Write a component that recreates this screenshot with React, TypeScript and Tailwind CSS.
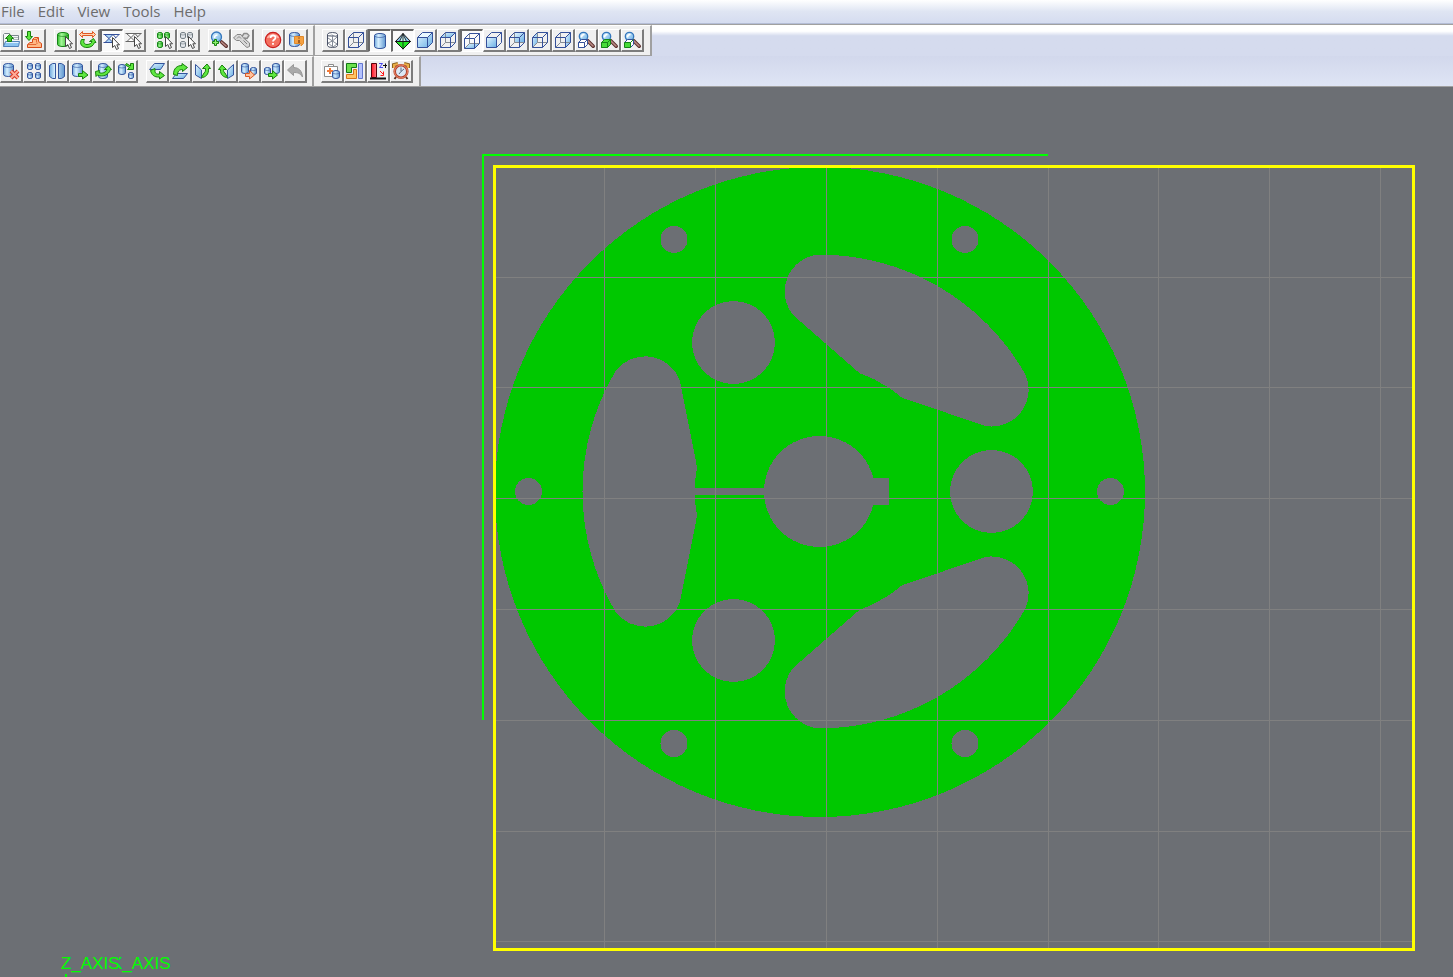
import React from "react";

const NAVY = "#34509a";
const GREEN = "#17800c";
const BLUE_LINE = "#34549c";

type Kids = { children: React.ReactNode };

function Icon({ children }: Kids) {
  return (
    <svg viewBox="0 0 20 20" className="block h-5 w-5" fill="none" aria-hidden="true">
      {children}
    </svg>
  );
}

function Gradients() {
  return (
    <svg className="absolute h-0 w-0" aria-hidden="true">
      <defs>
        <linearGradient id="blue" x1="0" y1="0" x2="1" y2="0">
          <stop offset="0" stopColor="#6fa8dc" />
          <stop offset="0.35" stopColor="#d6efff" />
          <stop offset="1" stopColor="#5f97d0" />
        </linearGradient>
        <linearGradient id="sky" x1="0" y1="0" x2="1" y2="1">
          <stop offset="0" stopColor="#e4f6ff" />
          <stop offset="1" stopColor="#68aee4" />
        </linearGradient>
        <linearGradient id="leaf" x1="0" y1="0" x2="1" y2="0">
          <stop offset="0" stopColor="#2fbd28" />
          <stop offset="0.35" stopColor="#a4f79a" />
          <stop offset="1" stopColor="#2cb522" />
        </linearGradient>
        <linearGradient id="rose" x1="0" y1="0" x2="1" y2="0">
          <stop offset="0" stopColor="#ff1020" />
          <stop offset="1" stopColor="#ff8088" />
        </linearGradient>
      </defs>
    </svg>
  );
}

type CylProps = { x: number; y: number; w: number; h: number; fill?: string; line?: string };

function Cyl({ x, y, w, h, fill = "url(#blue)", line = BLUE_LINE }: CylProps) {
  const r = w / 2;
  const e = Math.min(2, w / 4);
  return (
    <g stroke={line}>
      <path
        fill={fill}
        d={`M${x} ${y + e}A${r} ${e} 0 0 1 ${x + w} ${y + e}V${y + h - e}A${r} ${e} 0 0 1 ${x} ${y + h - e}Z`}
      />
      <path d={`M${x} ${y + e}A${r} ${e} 0 0 0 ${x + w} ${y + e}`} strokeOpacity="0.6" />
    </g>
  );
}

function Cursor() {
  return <path d="M10.5 6.5V16.5L12.8 14.5L14.5 18.5L16.5 17.5L14.8 13.8H17.5Z" fill="#fff" stroke="#444" />;
}

type ShapeProps = { d: string; fill?: string; line?: string };

function Shape({ d, fill = "#5fe840", line = GREEN }: ShapeProps) {
  return <path d={d} fill={fill} stroke={line} strokeLinejoin="round" />;
}

type Face = "all" | "none" | "top" | "bottom" | "front" | "back" | "left" | "right";

const facePaths: Record<Face, string> = {
  none: "",
  all: "M2.5 7.5L7.5 2.5H17.5V12.5L12.5 17.5H2.5Z",
  top: "M2.5 7.5L7.5 2.5H17.5L12.5 7.5Z",
  bottom: "M2.5 17.5L7.5 12.5H17.5L12.5 17.5Z",
  front: "M2.5 7.5H12.5V17.5H2.5Z",
  back: "M7.5 2.5H17.5V12.5H7.5Z",
  left: "M2.5 7.5L7.5 2.5V12.5L2.5 17.5Z",
  right: "M12.5 7.5L17.5 2.5V12.5L12.5 17.5Z",
};

function Cube({ face }: { face: Face }) {
  const solid = face === "all" || face === "front";
  return (
    <Icon>
      <path d={facePaths[face]} fill="url(#sky)" />
      {!solid && <path d="M7.5 2.5V12.5H17.5M7.5 12.5L2.5 17.5" stroke="#858b93" />}
      {face === "all" && <path d={facePaths.top} fill="#e9f8ff" />}
      <path
        d="M2.5 7.5H12.5V17.5H2.5ZM2.5 7.5L7.5 2.5H17.5V12.5L12.5 17.5M12.5 7.5L17.5 2.5"
        stroke={NAVY}
        strokeLinejoin="round"
      />
    </Icon>
  );
}

function Lens({ cx, cy, r }: { cx: number; cy: number; r: number }) {
  return (
    <>
      <path d={`M${cx + r} ${cy + r}L17.2 16.2`} stroke="#5c302e" strokeWidth="3.6" strokeLinecap="round" />
      <path d={`M${cx + r} ${cy + r}L17 16`} stroke="#b98a84" strokeWidth="1.6" strokeLinecap="round" />
      <circle cx={cx} cy={cy} r={r} fill="url(#sky)" stroke="#3577bd" strokeWidth="1.3" />
      <path d={`M${cx - 2} ${cy + 1}A3 3 0 0 1 ${cx + 1} ${cy - 2}`} stroke="#fff" strokeWidth="1.5" />
    </>
  );
}

function ZoomCube({ fill, line, small }: { fill: string; line: string; small?: boolean }) {
  return (
    <Icon>
      <Lens cx={7.5} cy={6.5} r={4.2} />
      {small && <path d="M2.5 12.5L5.5 9.5H11.5V14.5L8.5 17.5" fill="#fff" stroke={NAVY} />}
      {!small && <path d="M2.5 12.5L5.5 9.5H11.5V14.5L8.5 17.5H2.5Z" fill={fill} stroke={line} />}
      <path d="M2.5 12.5H8.5V17.5H2.5ZM8.5 12.5L11.5 9.5" fill={fill} stroke={line} />
    </Icon>
  );
}

const Open = (
  <Icon>
    <path d="M2.5 16.5V4.5L3.5 3.5H8.5L9.5 5.5H17.5V10" fill="#f4f6f6" stroke="#7b858c" />
    <path d="M11 7.5H17M12 9.5H17" stroke="#b0b7bb" />
    <path d="M2.5 16.5L4.5 11.5H18.5L17.5 16.5Z" fill="#8cc4f0" stroke="#4f82bc" />
    <path d="M5 12.5H17.5" stroke="#dff1ff" />
    <Shape d="M8.5 4.5L12.5 8.5H10.5V11.5H6.5V8.5H4.5Z" fill="#48c832" />
  </Icon>
);

const ImportPart = (
  <Icon>
    <path
      d="M3.5 14.5L6 12.5H8.5V9.5L10.5 7.5H14.5V11.5L17.5 13.5V17.5H3.5Z"
      fill="#ffb986"
      stroke="#d84a18"
      strokeLinejoin="round"
    />
    <path d="M8.5 9.5H12.5L14 8M12.5 9.5V12.5M4 14.5H12L14 12.5" stroke="#d84a18" strokeOpacity="0.7" />
    <Shape d="M3.5 1.5H6.5V6.5H8.5L5 10.5L1.5 6.5H3.5Z" />
  </Icon>
);

const PickPart = (
  <Icon>
    <Cyl x={2.5} y={2.5} w={11} h={14} fill="url(#leaf)" line="#168417" />
    <Cursor />
  </Icon>
);

const Rotate = (
  <Icon>
    <Shape d="M1.5 4.5L4.5 1.5V3.5H14.5V1.5L17.5 4.5L14.5 7.5V5.5H4.5V7.5Z" fill="#ffd4b2" line="#e15720" />
    <Shape d="M3.5 9.5H6.5C5 12 6 14.5 9 14.5C12 14.5 13.5 13 14 11.5H11.5L15.5 8.5L18 12.5H16.5C15.5 15.5 13 17.5 9 17.5C4 17.5 1 14 3.5 9.5Z" />
  </Icon>
);

function PickFilter({ fill, line }: { fill: string; line: string }) {
  return (
    <Icon>
      <path d="M2.5 3.5L7 7.5L11 3.5Z" fill={fill} />
      <path d="M3 11.5L7 7.5L11 11.5Z" fill={fill} />
      <path
        d="M1.5 3.5H17.5M1.5 11.5H11M2.5 3.5L7 7.5L11 3.5L14 7M3 11.5L7 7.5L10.5 11M17 3.5L13 7.5"
        stroke={line}
      />
      <Cursor />
    </Icon>
  );
}

function PickGroup({ fill, line }: { fill: string; line: string }) {
  return (
    <Icon>
      <Cyl x={2.5} y={2.5} w={5} h={6} fill={fill} line={line} />
      <Cyl x={9.5} y={2.5} w={5} h={6} fill={fill} line={line} />
      <Cyl x={2.5} y={11.5} w={5} h={6} fill={fill} line={line} />
      <Cursor />
    </Icon>
  );
}

const ZoomIn = (
  <Icon>
    <Lens cx={7.5} cy={7} r={5} />
    <Shape d="M5.5 9.5H7.5V11.5H9.5V13.5H7.5V15.5H5.5V13.5H3.5V11.5H5.5Z" fill="#8cf070" />
  </Icon>
);

const Link = (
  <Icon>
    <path
      d="M10 6.5L12 3.5H15L17 5.5L15 8.5L12 8"
      fill="#dcdcdc"
      stroke="#8c8c8c"
      strokeWidth="1.4"
      strokeLinejoin="round"
    />
    <path
      d="M1.5 8L5 4.5H9L11 7.5L17.5 13V16.5L15 17.5L12.5 15.5L7.5 10.5H4.5Z"
      fill="#d8d8d8"
      stroke="#858585"
      strokeLinejoin="round"
    />
    <path d="M5 8.5L7 6.5L9 8.5M11.5 10.5L15 14" stroke="#858585" />
  </Icon>
);

const HelpMark = (
  <Icon>
    <circle cx="10" cy="10" r="7.7" fill="#f4705f" stroke="#c91f1f" strokeWidth="1.2" />
    <path d="M4.5 8A6 5 0 0 1 15.5 8" stroke="#ffb3a8" strokeWidth="1.5" />
    <path
      d="M7.5 8C7.5 4.7 12.5 4.7 12.5 7.7C12.5 9.5 10 9.5 10 11.5M10 13V14.8"
      stroke="#fff"
      strokeWidth="1.8"
    />
  </Icon>
);

const PartInfo = (
  <Icon>
    <Cyl x={3.5} y={2.5} w={10} h={14} />
    <path d="M8.5 6.5H17.5V13.5L15 16V13.5H8.5Z" fill="#f5a142" stroke="#e08a2a" />
    <path d="M13 7.5V8.5M13 10V13" stroke="#8b4a12" strokeWidth="1.5" />
  </Icon>
);

const Mesh = (
  <Icon>
    <Cyl x={4.5} y={2.5} w={10} h={15} fill="#fff" line="#4c5468" />
    <path d="M5 6L9 5L14 7L9.5 11L5 8M5 13L9.5 11L14 14L10 17L5 13M9.5 5V17" stroke="#858c98" />
  </Icon>
);

const Shaded = (
  <Icon>
    <Cyl x={4.5} y={2.5} w={11} h={15} />
  </Icon>
);

const Diamond = (
  <Icon>
    <path d="M2.5 10.5L10 2.5L17.5 10.5Z" fill="#8cc4e8" stroke="#111" />
    <path d="M10 3L13.5 10.5H6.5Z" fill="#c6f0f4" />
    <path d="M2.5 10.5H17.5L10 18Z" fill="#21e421" stroke="#111" />
    <path d="M10 2V18.5M6.5 10.5L10 3L13.5 10.5" stroke="#111" strokeWidth="0.8" />
  </Icon>
);

const Delete = (
  <Icon>
    <Cyl x={2.5} y={2.5} w={10} h={13} />
    <path d="M10 10L17 17M17 10L10 17" stroke="#d93a28" strokeWidth="4" />
    <path d="M10 10L17 17M17 10L10 17" stroke="#ffab98" strokeWidth="1.8" />
  </Icon>
);

const Pattern = (
  <Icon>
    <Cyl x={3.5} y={2.5} w={5} h={6} />
    <Cyl x={11.5} y={2.5} w={5} h={6} />
    <Cyl x={3.5} y={11.5} w={5} h={6} />
    <Cyl x={11.5} y={11.5} w={5} h={6} />
  </Icon>
);

const Split = (
  <Icon>
    <path
      d="M8.5 2.5V17.5H5.5L2.5 15.5V4.5L5.5 2.5ZM11.5 2.5V17.5H14.5L17.5 15.5V4.5L14.5 2.5Z"
      fill="url(#blue)"
      stroke={BLUE_LINE}
    />
  </Icon>
);

const Move = (
  <Icon>
    <Cyl x={2.5} y={2.5} w={10} h={13} />
    <Shape d="M8.5 12.5H12.5V9.5L18 14L12.5 18V15.5H8.5Z" />
  </Icon>
);

const Spin = (
  <Icon>
    <Cyl x={5.5} y={2.5} w={9} h={15} />
    <Shape d="M2.5 10.5L6.5 9.5L6 11.5C9 13 13 11.5 14 8.5H11.5L15.5 5L18.5 8.5H17.5C16 14 9 16.5 4.5 14L3 15.5Z" />
  </Icon>
);

const Scale = (
  <Icon>
    <Cyl x={2.5} y={3.5} w={7} h={10} />
    <Cyl x={12.5} y={11.5} w={5} h={6} />
    <Shape d="M10.5 2.5L14.5 5V2.5H17.5V8.5H11.5L13.5 6.5L9.5 4Z" />
  </Icon>
);

const FlipDown = (
  <Icon>
    <path d="M2.5 8.5L7.5 2.5H17.5L13.5 8.5Z" fill="url(#sky)" stroke={BLUE_LINE} />
    <Shape d="M3.5 9.5L8 7.5V10.5C8 12.5 10 13.5 12.5 13V10.5L17.5 14.5L12.5 18V16C7 16.5 4.5 13.5 3.5 9.5Z" />
  </Icon>
);

const FlipUp = (
  <Icon>
    <path d="M2.5 17.5L6.5 12.5H17.5L13.5 17.5Z" fill="url(#sky)" stroke={BLUE_LINE} />
    <Shape d="M3.5 13.5C3.5 7.5 7 4.5 12 4.5V2.5L17.5 6.5L12.5 10.5V8.5C9 8.5 7.5 10.5 7.5 14.5Z" />
  </Icon>
);

const TurnRight = (
  <Icon>
    <path d="M2.5 3.5L8.5 9V17.5L2.5 14Z" fill="url(#sky)" stroke={BLUE_LINE} />
    <Shape d="M8.5 16.5L11 12C12.5 11 12.5 10 12.5 7.5H9.5L14 3L17.5 7.5H15.5C16 14 12 16.5 8.5 16.5Z" />
  </Icon>
);

const TurnLeft = (
  <Icon>
    <path d="M17.5 3.5L11.5 9V17.5L17.5 14Z" fill="url(#sky)" stroke={BLUE_LINE} />
    <Shape d="M11.5 16.5L9 12C7.5 11 7.5 10 7.5 8.5H10.5L6 4L2.5 8.5H4.5C4 14 8 16.5 11.5 16.5Z" />
  </Icon>
);

const CopyOut = (
  <Icon>
    <Cyl x={2.5} y={2.5} w={7} h={10} />
    <Cyl x={11.5} y={6.5} w={6} h={7} />
    <Shape d="M6.5 12.5H10.5V9.5L15.5 14L10.5 18V15.5H6.5Z" fill="#ffc29c" line="#d95a26" />
  </Icon>
);

const CopyIn = (
  <Icon>
    <Cyl x={2.5} y={6.5} w={6} h={7} />
    <Cyl x={10.5} y={2.5} w={7} h={10} />
    <Shape d="M6.5 12.5H10.5V9.5L15.5 14L10.5 18V15.5H6.5Z" />
  </Icon>
);

const Undo = (
  <Icon>
    <path
      d="M2.5 9L8.5 3.5V6.5C14 6.5 17 10 17.5 16C15 12 12.5 11.5 8.5 11.5V14.5Z"
      fill="#a9a9a9"
      stroke="#989898"
    />
  </Icon>
);

const Repair = (
  <Icon>
    <path d="M2.5 5.5H15.5V15.5H2.5ZM6.5 5.5V3.5H11.5V5.5" fill="#fff" stroke="#8c8c8c" />
    <path d="M8 7V13M5 10H11" stroke="#f07a38" strokeWidth="2" />
    <Cyl x={10.5} y={9.5} w={7} h={8} />
  </Icon>
);

const Nest = (
  <Icon>
    <path d="M1.5 2.5H11.5V6.5H6.5V11.5H1.5Z" fill="#6be04c" stroke="#127814" />
    <path d="M8.5 8.5H11.5V17.5H1.5V13.5H8.5Z" fill="#ffc564" stroke="#d57418" />
    <path d="M13.5 2.5H17.5V17.5H13.5Z" fill="#b4c2fd" stroke="#6377cf" />
  </Icon>
);

const ZHeight = (
  <Icon>
    <path d="M3.5 2.5H8.5V16.5H3.5Z" fill="url(#rose)" stroke="#5a0008" />
    <path d="M2 17.5H18" stroke="#111" strokeWidth="2" />
    <path d="M11 2.5H14.5L11.5 6.5H15" stroke="#4747f0" />
    <path d="M15 4.5H19M17.5 2.5V7" stroke="#111" />
    <path d="M12 10L16 14M15.5 10.5V14.5H12.5" stroke="#ff1515" />
  </Icon>
);

const Alarm = (
  <Icon>
    <path d="M3 7V4L7 3M17 7V4L13 3" stroke="#8d6420" strokeWidth="4" />
    <path d="M3 7V4L7 3M17 7V4L13 3" stroke="#edb04a" strokeWidth="2" />
    <path d="M5 16L3.5 18M15 16L16.5 18" stroke="#5c3020" strokeWidth="2" />
    <circle cx="10" cy="10.5" r="6.3" fill="#dce8f4" stroke="#b04430" strokeWidth="2.6" />
    <circle cx="10" cy="10.5" r="6.5" stroke="#f08a68" />
    <path d="M10 6.5V10.5L13 8M10 10.5L8 13" stroke="#5b6b82" />
  </Icon>
);

type Tool = { label: string; icon: React.ReactNode; pressed?: boolean };

const mainGroups: Tool[][] = [
  [
    { label: "Open", icon: Open },
    { label: "Import part", icon: ImportPart },
  ],
  [
    { label: "Pick part", icon: PickPart },
    { label: "Rotate view", icon: Rotate },
    { label: "Pick facets", icon: <PickFilter fill="#a9d3f5" line={NAVY} />, pressed: true },
    { label: "Unpick facets", icon: <PickFilter fill="#fff" line="#666" /> },
  ],
  [
    { label: "Select all", icon: <PickGroup fill="url(#leaf)" line="#168417" /> },
    { label: "Select none", icon: <PickGroup fill="#e3e7eb" line="#6f7980" /> },
  ],
  [
    { label: "Zoom in", icon: ZoomIn },
    { label: "Link", icon: Link },
  ],
  [
    { label: "Help", icon: HelpMark },
    { label: "Part information", icon: PartInfo },
  ],
];

const viewTools: Tool[] = [
  { label: "Mesh", icon: Mesh },
  { label: "Wireframe", icon: <Cube face="none" /> },
  { label: "Shaded", icon: Shaded, pressed: true },
  { label: "Facets", icon: Diamond, pressed: true },
  { label: "Isometric view", icon: <Cube face="all" /> },
  { label: "Top view", icon: <Cube face="top" /> },
  { label: "Bottom view", icon: <Cube face="bottom" />, pressed: true },
  { label: "Front view", icon: <Cube face="front" /> },
  { label: "Back view", icon: <Cube face="back" /> },
  { label: "Left view", icon: <Cube face="left" /> },
  { label: "Right view", icon: <Cube face="right" /> },
  { label: "Zoom to platform", icon: <ZoomCube fill="#fff" line={NAVY} /> },
  { label: "Zoom to all parts", icon: <ZoomCube fill="#48dc38" line="#168417" /> },
  { label: "Zoom to selected part", icon: <ZoomCube fill="#48dc38" line="#168417" small /> },
];

const editGroups: Tool[][] = [
  [
    { label: "Delete", icon: Delete },
    { label: "Pattern", icon: Pattern },
    { label: "Split", icon: Split },
    { label: "Move", icon: Move },
    { label: "Rotate", icon: Spin },
    { label: "Scale", icon: Scale },
  ],
  [
    { label: "Flip down", icon: FlipDown },
    { label: "Flip up", icon: FlipUp },
    { label: "Turn right", icon: TurnRight },
    { label: "Turn left", icon: TurnLeft },
    { label: "Copy out", icon: CopyOut },
    { label: "Copy in", icon: CopyIn },
    { label: "Undo", icon: Undo },
  ],
];

const buildTools: Tool[] = [
  { label: "Repair", icon: Repair },
  { label: "Nest", icon: Nest },
  { label: "Height", icon: ZHeight },
  { label: "Build time", icon: Alarm },
];

function ToolButton({ label, icon, pressed }: Tool) {
  const tone = pressed
    ? "border-t-2 border-l-2 border-r border-b border-t-[#696969] border-l-[#696969] border-r-white border-b-white bg-[#fafafa]"
    : "border-t border-l border-r-2 border-b-2 border-t-white border-l-white border-r-[#7c7c7c] border-b-[#7c7c7c] bg-[#f0f0f0]";
  return (
    <button type="button" aria-label={label} aria-pressed={pressed} className={"h-[23px] w-[23px] shrink-0 " + tone}>
      {icon}
    </button>
  );
}

function Group({ tools }: { tools: Tool[] }) {
  return (
    <div className="flex">
      {tools.map((t) => (
        <ToolButton key={t.label} {...t} />
      ))}
    </div>
  );
}

function Bar({ children }: Kids) {
  return (
    <div className="flex h-[31px] items-center border-t border-r-2 border-b border-t-white border-r-[#a0a0a0] border-b-[#a0a0a0] bg-[#f0f0f0]">
      {children}
    </div>
  );
}

const menus = ["File", "Edit", "View", "Tools", "Help"];
const gridX = [604, 715, 826, 937, 1048, 1158, 1269, 1380];
const gridY = [277, 387, 498, 609, 720, 831, 941];
const center = { x: 819.5, y: 491.5 };
const slot =
  "M695 492V482L697 467L680 381A37 37 0 0 0 615 372A236 236 0 0 0 615 611A37 37 0 0 0 680 602L697 516L695 501Z";

function polar(radius: number, degrees: number) {
  const a = (degrees * Math.PI) / 180;
  return { cx: center.x + radius * Math.cos(a), cy: center.y + radius * Math.sin(a) };
}

function Viewport() {
  return (
    <svg viewBox="0 87 1453 890" className="block w-full" role="img" aria-label="Part on the build platform">
      <g shapeRendering="crispEdges">
        <circle cx="820" cy="492" r="325" fill="#00c800" />
        <g fill="#6c6f74">
          {[0, 120, 240].map((a) => (
            <path key={a} d={slot} transform={`rotate(${a} ${center.x} ${center.y})`} />
          ))}
          {[0, 120, 240].map((a) => (
            <circle key={a} {...polar(172, a)} r="41.5" />
          ))}
          {[0, 60, 120, 180, 240, 300].map((a) => (
            <circle key={a} {...polar(291, a)} r="13.5" />
          ))}
          <circle cx={center.x} cy={center.y} r="55.5" />
          <path d="M860 478H889V505H860ZM690 488H770V495H690Z" />
        </g>
        <g stroke="#808080">
          {gridX.map((x) => (
            <path key={x} d={`M${x + 0.5} 168V948`} />
          ))}
          {gridY.map((y) => (
            <path key={y} d={`M496 ${y + 0.5}H1412`} />
          ))}
        </g>
        <path d="M1048 155H483V720" fill="none" stroke="#00ff00" strokeWidth="2" />
        <rect x="494.5" y="166.5" width="919" height="783" fill="none" stroke="#ffff00" strokeWidth="3" />
        <path d="M66 974V977" stroke="#00ff00" strokeWidth="2" />
      </g>
      <clipPath id="axis-label">
        <rect x="119" y="950" width="80" height="27" />
      </clipPath>
      <g fill="#00ff00" fontFamily="Liberation Sans, Arial, sans-serif" fontSize="17">
        <text x="61" y="969">
          Z_AXIS
        </text>
        <text x="111" y="969" clipPath="url(#axis-label)">
          X_AXIS
        </text>
      </g>
    </svg>
  );
}

export default function App() {
  return (
    <div className="min-h-screen bg-[#6c6f74] font-['Open_Sans','Noto_Sans',sans-serif]">
      <Gradients />
      <header className="overflow-hidden bg-[#d5dbee]">
        <nav className="flex h-6 items-center gap-[13px] border-b border-[#b4bdd6] bg-linear-to-b from-white via-[#dfe5f3] to-[#d5dcf0] pb-0.5 pl-px text-[15px] leading-5 text-[#6d6d6d]">
          {menus.map((m) => (
            <a key={m} href={"#" + m.toLowerCase()}>
              {m}
            </a>
          ))}
        </nav>
        <div className="flex border-t border-[#a0a0a0] bg-linear-to-b from-white from-20% to-[#d5dbee] to-35%">
          <Bar>
            <div className="flex gap-2 pr-[5px]">
              {mainGroups.map((g) => (
                <Group key={g[0].label} tools={g} />
              ))}
            </div>
          </Bar>
          <Bar>
            <div className="pr-1.5 pl-[7px]">
              <Group tools={viewTools} />
            </div>
          </Bar>
        </div>
        <div className="flex bg-linear-to-b from-[#d2d8ec] to-[#dfe5f5]">
          <Bar>
            <div className="flex gap-2 pr-[5px]">
              {editGroups.map((g) => (
                <Group key={g[0].label} tools={g} />
              ))}
            </div>
          </Bar>
          <Bar>
            <div className="pr-1.5 pl-[7px]">
              <Group tools={buildTools} />
            </div>
          </Bar>
          <div className="flex-1 border-b border-[#a0a0a0]" />
        </div>
      </header>
      <main>
        <Viewport />
      </main>
    </div>
  );
}
